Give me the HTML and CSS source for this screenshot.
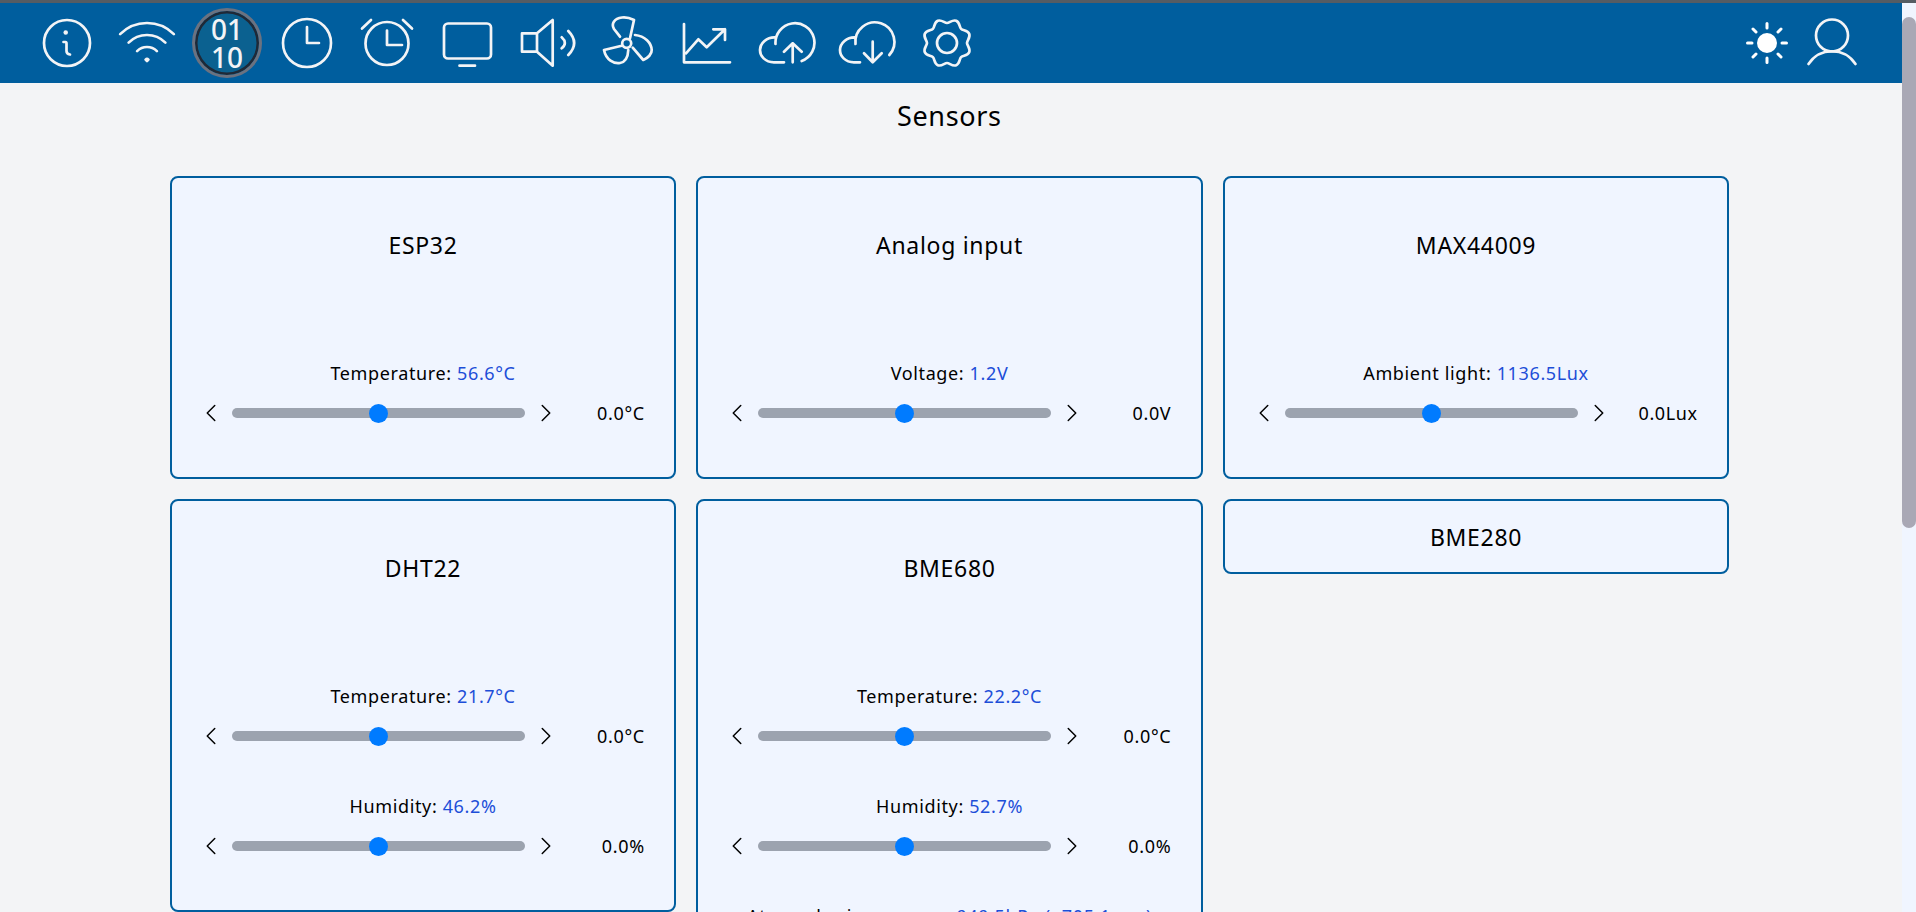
FILE: index.html
```html
<!DOCTYPE html>
<html>
<head>
    <title>Sensors</title>
    <link rel="stylesheet" href="styles.css">
</head>
<body>
    <div class="top-strip"></div>
    <div class="window">
        <div class="page">
            <header class="navbar">
                <nav class="nav-left">
                    <a class="nav-item" href="#">
                        <svg class="icon icon-px" viewBox="35 11 64 64"><circle cx="67" cy="43" r="23"/><path d="M63.500 42H65.500Q66.500 42 66.500 43.500V51Q66.500 54 70 54.500"/><path class="icon-dot" d="M65.700 32.400h.01"/></svg>
                    </a>
                    <a class="nav-item" href="#">
                        <svg class="icon" viewBox="0 0 24 24"><path d="M8.288 15.038a5.25 5.25 0 0 1 7.424 0M5.106 11.856c3.807-3.808 9.98-3.808 13.788 0M1.924 8.674c5.565-5.565 14.587-5.565 20.152 0M12.53 18.22l-.53.53-.53-.53a.75.75 0 0 1 1.06 0Z"/></svg>
                    </a>
                    <a class="nav-item" href="#">
                        <span class="binary-badge">01<br>10</span>
                    </a>
                    <a class="nav-item" href="#">
                        <svg class="icon" viewBox="0 0 24 24"><path d="M12 6v6h4.5m4.5 0a9 9 0 1 1-18 0 9 9 0 0 1 18 0Z"/></svg>
                    </a>
                    <a class="nav-item" href="#">
                        <svg class="icon icon-px" viewBox="355 11 64 64"><circle cx="387" cy="43.500" r="21.500"/><path d="M387 30.500V45H402M362 28.500 371 20M403 20 412 28.500"/></svg>
                    </a>
                    <a class="nav-item" href="#">
                        <svg class="icon icon-px" viewBox="435 11 64 64"><rect x="444" y="23.500" width="47" height="35" rx="4"/><path d="M459.500 65.700H475"/></svg>
                    </a>
                    <a class="nav-item" href="#">
                        <svg class="icon icon-px" viewBox="515 11 64 64"><path d="M522 33.300H537V51.700H522ZM537 33.300 552.700 20V65.700L537 51.700M561.700 37.300Q568 43 561.700 48.300M568.300 31Q580 43 568.300 55"/></svg>
                    </a>
                    <a class="nav-item" href="#">
                        <svg class="icon icon-px" viewBox="595 11 64 64"><circle cx="626.700" cy="43.300" r="4.500"/><path d="M620 36.700 614 29C611 24 614 18.500 622 17.500 626 17 630 18 634 20L630 38.300M632.700 47.700 643.300 60C648 58 652 54 651.700 50 651.500 43 645 36 635 35M621.700 45.700 604 50C606 60 614 64 620 63 626 62 628 56 628.300 50"/></svg>
                    </a>
                    <a class="nav-item" href="#">
                        <svg class="icon icon-px" viewBox="675 11 64 64"><path d="M684 24V62.300H730M686 53.300 698.300 39.300 706.700 47.300 725 29.300M713.300 29.300H725V40"/></svg>
                    </a>
                    <a class="nav-item" href="#">
                        <svg class="icon icon-px" viewBox="755 11 64 64"><path d="M784 62.300H774C765 62.300 760 56 760 50 760 43 767 37 775 37.300M775.500 44A19.500 19.500 0 1 1 801.700 61M792.700 62.300V43.300M784 51.700 792.700 43.300 801.700 51.700"/></svg>
                    </a>
                    <a class="nav-item" href="#">
                        <svg class="icon icon-px" viewBox="835 11 64 64"><path d="M860 62.300H854C845 62.300 840 56 840 50 840 43 847 37 855 37.300M855.500 44A19.500 19.500 0 1 1 889.300 55M872.700 41.700V62.300M864 53.300 872.700 62.300 881.700 53.300"/></svg>
                    </a>
                    <a class="nav-item" href="#">
                        <svg class="icon icon-px" viewBox="-32 -32 64 64"><circle r="10"/><path d="M0 -20C2.500 -20 5.500 -23.700 9.200 -22.200C12.900 -20.700 12.300 -15.900 14.100 -14.100C15.900 -12.300 20.700 -12.900 22.200 -9.200C23.700 -5.500 20 -2.500 20 0C20 2.500 23.700 5.500 22.200 9.200C20.700 12.900 15.900 12.300 14.100 14.100C12.300 15.900 12.900 20.700 9.200 22.200C5.500 23.700 2.500 20 0 20C-2.500 20 -5.500 23.700 -9.200 22.200C-12.900 20.700 -12.300 15.900 -14.100 14.100C-15.900 12.300 -20.700 12.900 -22.200 9.200C-23.700 5.500 -20 2.500 -20 0C-20 -2.500 -23.700 -5.500 -22.200 -9.200C-20.700 -12.900 -15.900 -12.300 -14.100 -14.100C-12.300 -15.900 -12.900 -20.700 -9.200 -22.200C-5.500 -23.700 -2.500 -20 0 -20Z"/></svg>
                    </a>
                </nav>
                <div class="nav-right">
                    <a class="theme-toggle" href="#">
                        <svg class="icon-sun" viewBox="-24 -24 48 48"><circle r="8.500"/><path d="M0-19.500V-15M0 15V19.500M-19.500 0H-15M15 0H19.500M-14-14-11-11M14-14 11-11M-14 14-11 11M14 14 11 11"/></svg>
                    </a>
                    <a class="nav-item user-item" href="#">
                        <svg class="icon icon-px" viewBox="1800 11 64 64"><circle cx="1832" cy="35.500" r="16"/><path d="M1808.500 64C1820 47 1844 47 1855.500 64"/></svg>
                    </a>
                </div>
            </header>

            <main class="content">
                <h1 class="page-title">Sensors</h1>
                <div class="card-grid">
                    <section class="card">
                        <h2 class="card-title">ESP32</h2>
                        <div class="card-body">
                            <div class="sensor">
                                <div class="sensor-label">Temperature: <span class="sensor-value">56.6°C</span></div>
                                <div class="sensor-row">
                                    <button class="step"><svg viewBox="0 0 24 24"><path d="M15.75 19.5 8.25 12l7.500-7.500"/></svg></button>
                                    <input class="range" type="range" min="-50" max="50" value="0">
                                    <button class="step"><svg viewBox="0 0 24 24"><path d="m8.250 4.500 7.500 7.500-7.500 7.500"/></svg></button>
                                    <span class="offset">0.0°C</span>
                                </div>
                            </div>
                        </div>
                    </section>

                    <section class="card">
                        <h2 class="card-title">Analog input</h2>
                        <div class="card-body">
                            <div class="sensor">
                                <div class="sensor-label">Voltage: <span class="sensor-value">1.2V</span></div>
                                <div class="sensor-row">
                                    <button class="step"><svg viewBox="0 0 24 24"><path d="M15.75 19.5 8.25 12l7.500-7.500"/></svg></button>
                                    <input class="range" type="range" min="-50" max="50" value="0">
                                    <button class="step"><svg viewBox="0 0 24 24"><path d="m8.250 4.500 7.500 7.500-7.500 7.500"/></svg></button>
                                    <span class="offset">0.0V</span>
                                </div>
                            </div>
                        </div>
                    </section>

                    <section class="card">
                        <h2 class="card-title">MAX44009</h2>
                        <div class="card-body">
                            <div class="sensor">
                                <div class="sensor-label">Ambient light: <span class="sensor-value">1136.5Lux</span></div>
                                <div class="sensor-row">
                                    <button class="step"><svg viewBox="0 0 24 24"><path d="M15.75 19.5 8.25 12l7.500-7.500"/></svg></button>
                                    <input class="range" type="range" min="-50" max="50" value="0">
                                    <button class="step"><svg viewBox="0 0 24 24"><path d="m8.250 4.500 7.500 7.500-7.500 7.500"/></svg></button>
                                    <span class="offset">0.0Lux</span>
                                </div>
                            </div>
                        </div>
                    </section>

                    <section class="card">
                        <h2 class="card-title">DHT22</h2>
                        <div class="card-body">
                            <div class="sensor">
                                <div class="sensor-label">Temperature: <span class="sensor-value">21.7°C</span></div>
                                <div class="sensor-row">
                                    <button class="step"><svg viewBox="0 0 24 24"><path d="M15.75 19.5 8.25 12l7.500-7.500"/></svg></button>
                                    <input class="range" type="range" min="-50" max="50" value="0">
                                    <button class="step"><svg viewBox="0 0 24 24"><path d="m8.250 4.500 7.500 7.500-7.500 7.500"/></svg></button>
                                    <span class="offset">0.0°C</span>
                                </div>
                            </div>
                            <div class="sensor">
                                <div class="sensor-label">Humidity: <span class="sensor-value">46.2%</span></div>
                                <div class="sensor-row">
                                    <button class="step"><svg viewBox="0 0 24 24"><path d="M15.75 19.5 8.25 12l7.500-7.500"/></svg></button>
                                    <input class="range" type="range" min="-50" max="50" value="0">
                                    <button class="step"><svg viewBox="0 0 24 24"><path d="m8.250 4.500 7.500 7.500-7.500 7.500"/></svg></button>
                                    <span class="offset">0.0%</span>
                                </div>
                            </div>
                        </div>
                    </section>

                    <section class="card">
                        <h2 class="card-title">BME680</h2>
                        <div class="card-body">
                            <div class="sensor">
                                <div class="sensor-label">Temperature: <span class="sensor-value">22.2°C</span></div>
                                <div class="sensor-row">
                                    <button class="step"><svg viewBox="0 0 24 24"><path d="M15.75 19.5 8.25 12l7.500-7.500"/></svg></button>
                                    <input class="range" type="range" min="-50" max="50" value="0">
                                    <button class="step"><svg viewBox="0 0 24 24"><path d="m8.250 4.500 7.500 7.500-7.500 7.500"/></svg></button>
                                    <span class="offset">0.0°C</span>
                                </div>
                            </div>
                            <div class="sensor">
                                <div class="sensor-label">Humidity: <span class="sensor-value">52.7%</span></div>
                                <div class="sensor-row">
                                    <button class="step"><svg viewBox="0 0 24 24"><path d="M15.75 19.5 8.25 12l7.500-7.500"/></svg></button>
                                    <input class="range" type="range" min="-50" max="50" value="0">
                                    <button class="step"><svg viewBox="0 0 24 24"><path d="m8.250 4.500 7.500 7.500-7.500 7.500"/></svg></button>
                                    <span class="offset">0.0%</span>
                                </div>
                            </div>
                            <div class="sensor">
                                <div class="sensor-label">Atmospheric pressure: <span class="sensor-value">949.5hPa (~705.1mm)</span></div>
                            </div>
                        </div>
                    </section>

                    <section class="card card-collapsed">
                        <h2 class="card-title">BME280</h2>
                    </section>
                </div>
            </main>
        </div>
        <div class="scrollbar"><div class="scrollbar-thumb"></div></div>
    </div>
</body>
</html>
```

FILE: styles.css
```css
* {
    box-sizing: border-box;
}
body {
    margin: 0;
    height: 912px;
    overflow: hidden;
    background-color: #f3f4f6;
    color: #000;
    font-family: "Noto Sans", "Liberation Sans", sans-serif;
    font-size: 18px;
    letter-spacing: 0.035em;
}
.top-strip {
    height: 3px;
    background-color: #555c63;
}
.window {
    display: flex;
    height: 909px;
}
.page {
    flex: 1;
    overflow: hidden;
}
.scrollbar {
    width: 14px;
    padding-top: 14px;
    background-color: #f0f5ff;
}
.scrollbar-thumb {
    height: 511px;
    border-radius: 7px;
    background-color: #a9a8b5;
}

/* navbar */
.navbar {
    display: flex;
    align-items: center;
    justify-content: space-between;
    height: 80px;
    padding: 0 38px 0 27px;
    background-color: #005e9e;
}
.nav-left, .nav-right {
    display: flex;
    align-items: center;
}
.nav-item {
    display: flex;
    align-items: center;
    justify-content: center;
    width: 80px;
    height: 80px;
    text-decoration: none;
}
.user-item {
    width: 64px;
}
.icon {
    width: 64px;
    height: 64px;
    fill: none;
    stroke: #f3f4f6;
    stroke-width: 1;
    stroke-linecap: round;
    stroke-linejoin: round;
}
.icon-px {
    stroke-width: 2.700;
}
.icon-dot {
    stroke-width: 4.500;
}
.binary-badge {
    display: block;
    width: 70px;
    height: 70px;
    padding-top: 4px;
    border: 3px solid #6b7280;
    border-radius: 50%;
    box-shadow: inset 0 0 0 2.500px #1f2937;
    background-color: #0b6190;
    color: #f3f4f6;
    font-size: 28px;
    font-weight: 500;
    letter-spacing: 0;
    line-height: 28px;
    text-align: center;
}
.theme-toggle {
    display: flex;
    margin-right: 9px;
}
.icon-sun {
    width: 48px;
    height: 48px;
    fill: #fff;
    stroke: #fff;
    stroke-width: 3;
    stroke-linecap: round;
}

/* content */
.content {
    padding: 17px 0 0 169.750px;
}
.page-title {
    width: 1559px;
    margin: 0 0 44px;
    font-size: 27px;
    font-weight: 400;
    line-height: 32px;
    text-align: center;
}
.card-grid {
    display: grid;
    grid-template-columns: repeat(3, 506.500px);
    gap: 20px;
    align-items: start;
}
.card {
    padding: 32px 0 6px;
    border: 2px solid #005e9e;
    border-radius: 8px;
    background-color: #f0f5ff;
}
.card-collapsed {
    padding: 1px 0 0;
}
.card-title {
    margin: 0;
    padding: 21px 0;
    font-size: 23px;
    font-weight: 400;
    letter-spacing: 0.03em;
    line-height: 28px;
    text-align: center;
}
.card-body {
    padding-top: 81px;
}
.sensor {
    margin-bottom: 46px;
}
.sensor-label {
    margin-bottom: 16px;
    line-height: 24px;
    text-align: center;
}
.sensor-value {
    color: #1d4ed8;
}
.sensor-row {
    display: flex;
    align-items: center;
    padding-left: 27px;
}
.step {
    width: 24px;
    height: 24px;
    padding: 0;
    border: none;
    background: none;
    cursor: pointer;
}
.step svg {
    display: block;
    width: 24px;
    height: 24px;
    fill: none;
    stroke: #000;
    stroke-width: 1.500;
    stroke-linecap: round;
    stroke-linejoin: round;
}
.range {
    -webkit-appearance: none;
    appearance: none;
    width: 293px;
    height: 10px;
    margin: 0 9px;
    border-radius: 5px;
    background-color: #9ca3af;
    outline: none;
}
.range::-webkit-slider-thumb {
    -webkit-appearance: none;
    appearance: none;
    width: 19px;
    height: 19px;
    border-radius: 50%;
    background-color: #007bff;
    cursor: pointer;
}
.offset {
    width: 87px;
    text-align: right;
}
```
